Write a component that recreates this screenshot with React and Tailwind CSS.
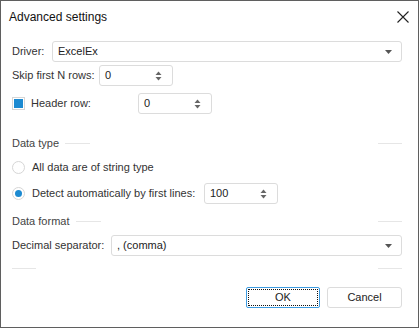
import React from "react";

const font = { fontFamily: '"Liberation Sans", Arial, sans-serif' };

function Arrow() {
  return (
    <svg width="7" height="4" viewBox="0 0 7 4" className="block">
      <path d="M0 0 H7 L3.5 4 Z" fill="#555" />
    </svg>
  );
}

function Spin() {
  return (
    <div className="flex flex-col items-center gap-[2px]">
      <svg width="7" height="4" viewBox="0 0 7 4" className="block">
        <path d="M0.5 4 H6.5 L3.5 0.5 Z" fill="#666" />
      </svg>
      <svg width="7" height="4" viewBox="0 0 7 4" className="block">
        <path d="M0.5 0 H6.5 L3.5 3.5 Z" fill="#666" />
      </svg>
    </div>
  );
}

function SpinBox({ value }) {
  return (
    <div className="h-[21px] w-[74px] shrink-0 border border-[#dcdcdc] rounded-[3px] flex items-center pl-[5px] pr-[10px] justify-between bg-white">
      <span className="text-[#222]">{value}</span>
      <Spin />
    </div>
  );
}

function Select({ value }) {
  return (
    <div className="h-[21px] flex-1 border border-[#dcdcdc] rounded-[3px] flex items-center pl-[5px] pr-[9px] justify-between bg-white">
      <span className="text-[#222]">{value}</span>
      <Arrow />
    </div>
  );
}

function GroupHeader({ title, lineLeft }) {
  return (
    <div className="h-[16px] flex items-center relative">
      <span className="text-[#444] whitespace-nowrap">{title}</span>
      <div className="absolute h-px bg-[#e6e6e6] w-[25px] top-[8px]" style={{ left: lineLeft }} />
      <div className="absolute h-px bg-[#e6e6e6] w-[24px] top-[8px] right-0" />
    </div>
  );
}

export default function App() {
  return (
    <div className="w-[419px] h-[328px] bg-white border border-[#5f5f5f] flex flex-col" style={font}>
      <div className="h-[31px] flex items-center justify-between pl-[8px] pr-[9px]">
        <span className="text-[12px] text-[#111]">Advanced settings</span>
        <svg width="12" height="12" viewBox="0 0 12 12">
          <path d="M0.5 0.5 L11.5 11.5 M11.5 0.5 L0.5 11.5" stroke="#222" strokeWidth="1.1" />
        </svg>
      </div>
      <div className="flex flex-col pl-[11px] pr-[16px] text-[11px] text-[#333] whitespace-nowrap">
        <div className="mt-[9px] h-[21px] flex items-center">
          <span className="w-[40px] shrink-0">Driver:</span>
          <Select value="ExcelEx" />
        </div>
        <div className="mt-[3px] h-[21px] flex items-center">
          <span className="w-[87px] shrink-0">Skip first N rows:</span>
          <SpinBox value="0" />
        </div>
        <div className="mt-[7px] h-[21px] flex items-center">
          <div className="w-[13px] h-[13px] shrink-0 border border-[#d6d6d6] flex items-center justify-center">
            <div className="w-[9px] h-[9px] bg-[#1c8ad1]" />
          </div>
          <span className="ml-[6px] w-[107px] shrink-0">Header row:</span>
          <SpinBox value="0" />
        </div>
        <div className="mt-[21px]">
          <GroupHeader title="Data type" lineLeft="53px" />
        </div>
        <div className="mt-[8px] h-[16px] flex items-center">
          <div className="w-[13px] h-[13px] shrink-0 rounded-full border border-[#d6d6d6]" />
          <span className="ml-[7px]">All data are of string type</span>
        </div>
        <div className="mt-[8px] h-[21px] flex items-center">
          <div className="w-[13px] h-[13px] shrink-0 rounded-full border border-[#d6d6d6] flex items-center justify-center">
            <div className="w-[7px] h-[7px] rounded-full bg-[#1c8ad1]" />
          </div>
          <span className="ml-[7px] w-[172px] shrink-0">Detect automatically by first lines:</span>
          <SpinBox value="100" />
        </div>
        <div className="mt-[9px]">
          <GroupHeader title="Data format" lineLeft="64px" />
        </div>
        <div className="mt-[6px] h-[21px] flex items-center">
          <span className="w-[99px] shrink-0">Decimal separator:</span>
          <Select value=", (comma)" />
        </div>
        <div className="mt-[12px] h-px flex justify-between">
          <div className="w-[24px] h-px bg-[#e6e6e6]" />
          <div className="w-[24px] h-px bg-[#e6e6e6]" />
        </div>
        <div className="mt-[18px] flex justify-end gap-[7px]">
          <div className="w-[74px] h-[21px] border border-[#3d9be0] rounded-[2px] p-[1px]">
            <div className="w-full h-full border border-dotted border-[#111] flex items-center justify-center text-[#222]">OK</div>
          </div>
          <div className="w-[75px] h-[21px] border border-[#dcdcdc] rounded-[3px] flex items-center justify-center text-[#222]">Cancel</div>
        </div>
      </div>
    </div>
  );
}
